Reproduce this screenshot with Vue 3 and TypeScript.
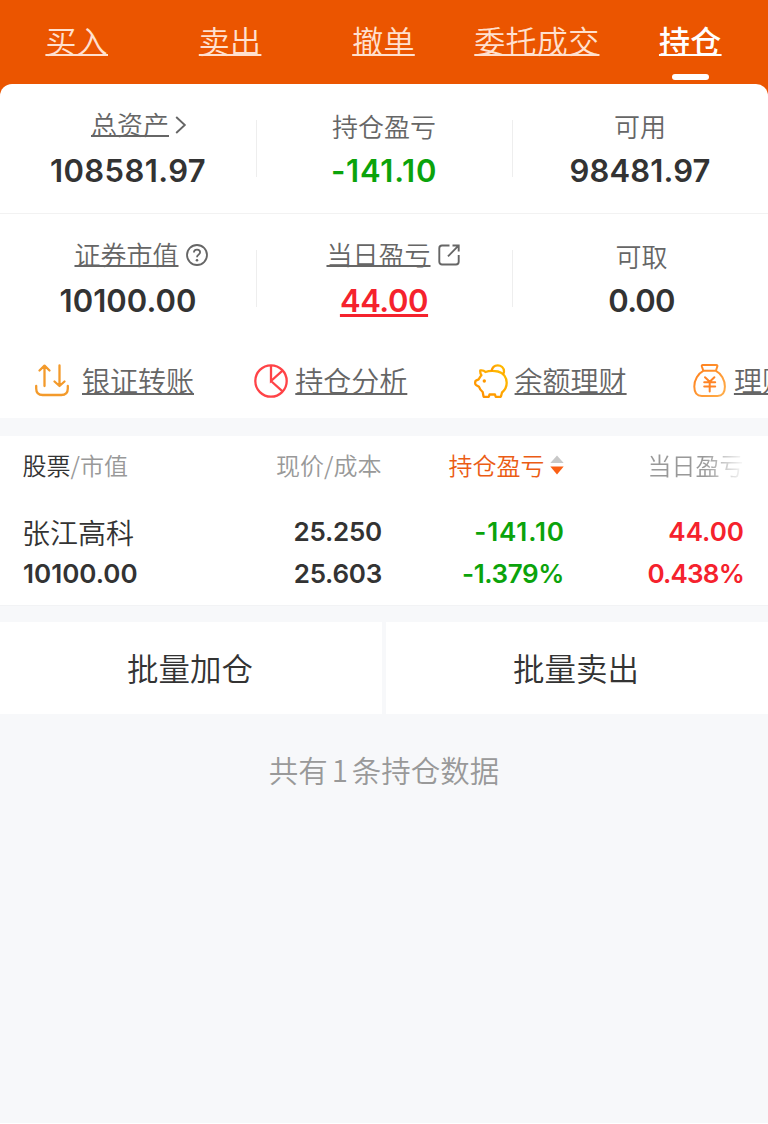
<script setup lang="ts">
interface Metric {
  label: string
  value: string
  tracking: number
  tone?: 'green' | 'red'
  icon?: 'chevron' | 'help' | 'share'
}

const tabs: string[] = ['买入', '卖出', '撤单', '委托成交', '持仓']
const activeTab = '持仓'

const rows: Metric[][] = [
  [
    { label: '总资产', value: '108581.97', tracking: 0.4, icon: 'chevron' },
    { label: '持仓盈亏', value: '-141.10', tracking: 0.75, tone: 'green' },
    { label: '可用', value: '98481.97', tracking: 0.15 },
  ],
  [
    { label: '证券市值', value: '10100.00', tracking: 0.05, icon: 'help' },
    { label: '当日盈亏', value: '44.00', tracking: -0.4, tone: 'red', icon: 'share' },
    { label: '可取', value: '0.00', tracking: -0.8 },
  ],
]

const actions = [
  { name: 'transfer', label: '银证转账' },
  { name: 'pie', label: '持仓分析' },
  { name: 'piggy', label: '余额理财' },
  { name: 'bag', label: '理财' },
]
</script>

<template>
  <div class="page">
    <nav class="tabs">
      <div v-for="t in tabs" :key="t" class="tab" :class="{ active: t === activeTab }">
        <span class="u">{{ t }}</span>
        <i v-if="t === activeTab" class="bar"></i>
      </div>
    </nav>

    <section class="card">
      <div v-for="(row, r) in rows" :key="r" class="row">
        <div v-for="m in row" :key="m.label" class="cell">
          <div class="label" :class="[m.icon ? 'link' : '', m.icon]">
            <span>{{ m.label }}</span>
            <svg v-if="m.icon === 'chevron'" width="12" height="20" viewBox="0 0 12 20" fill="none" stroke="#666" stroke-width="1.9">
              <path d="M1.200 2 9.800 10 1.200 18" />
            </svg>
            <svg v-else-if="m.icon === 'help'" width="22" height="22" viewBox="0 0 22 22" fill="none" stroke="#666" stroke-width="1.8">
              <circle cx="11" cy="11" r="10" />
              <path d="M7.9 8.5c0-1.8 1.3-2.9 3.1-2.9s3.1 1.1 3.1 2.7c0 2.2-3.1 2.4-3.1 4.9" />
              <circle cx="11" cy="16.2" r="1.3" fill="#666" stroke="none" />
            </svg>
            <svg v-else-if="m.icon === 'share'" width="22" height="22" viewBox="0 0 22 22" fill="none" stroke="#666" stroke-width="1.9">
              <path d="M11.5 1.500H4A2.700 2.700 0 0 0 1.300 4.200v13.600A2.700 2.700 0 0 0 4 20.500h14a2.700 2.700 0 0 0 2.700-2.700V11M14.500 1.500h6.200V7.500M20.500 1.700 10 12.300" />
            </svg>
          </div>
          <div class="value" :class="m.tone" :style="{ letterSpacing: m.tracking + 'px' }">{{ m.value }}</div>
        </div>
      </div>

      <div class="actions">
        <div v-for="a in actions" :key="a.name" class="action" :class="a.name">
          <svg v-if="a.name === 'transfer'" width="34" height="34" viewBox="0 0 34 34" fill="none" stroke="#f39a2b" stroke-width="2.300" stroke-linecap="round" stroke-linejoin="round">
            <path d="M9.500 22V2M4.500 6.500 9.500 1.700l5 4.800M24.500 1.500v20M19.500 17.500l5 4.500 5-4.500M1.200 22v2.500q0 6.500 6.500 6.500h18.600q6.500 0 6.500-6.500V22" />
          </svg>
          <svg v-else-if="a.name === 'pie'" width="34" height="34" viewBox="0 0 34 34" fill="none" stroke="#ff4347" stroke-width="2.300">
            <circle cx="17" cy="17" r="15.700" />
            <path d="M17 1.300V17l11.500-10.300M17 17l11.800 10.600" />
          </svg>
          <svg v-else-if="a.name === 'piggy'" width="34" height="34" viewBox="0 0 34 34" fill="none" stroke="url(#pig)" stroke-width="2.300" stroke-linejoin="round">
            <defs>
              <linearGradient id="pig" x1="1" y1="0" x2="0" y2="1">
                <stop offset="0" stop-color="#ffc000" />
                <stop offset="1" stop-color="#ff8a00" />
              </linearGradient>
            </defs>
            <path d="M6.300 6.500c2.500-.400 4 .300 5.200 1.500 3-1.200 9-1.200 12.500-.500 5.500 1.200 8.700 6 8.700 11.300 0 4-1.700 7.200-4.700 9.700l-1 3.700q-.300.800-1 .800h-3.500q-.800 0-1-.800l-.500-1.700h-5.500l-.5 1.700q-.200.800-1 .800h-3.500q-.800 0-1-.800l-.800-4.200C7 26.500 5.500 24.500 5 22.700l-2.600-1.400Q1.200 20.600 1.200 19.500v-1.600q0-1 1.200-1.500l2.300-1c.8-1.800 1.800-3 2.700-4.200-1-1.400-1.300-3-1.100-4.700Z" />
            <path d="M17.500 7.200c.6-3.600 3-5.900 6.200-5.900 3.500 0 6.300 2.600 6.300 6 0 1.300-.3 2.300-1 3.200" />
            <circle cx="10.300" cy="17" r="1.700" fill="#ff9800" stroke="none" />
          </svg>
          <svg v-else width="34" height="34" viewBox="0 0 34 34" fill="none" stroke="url(#bag)" stroke-width="2" stroke-linejoin="round" stroke-linecap="round">
            <defs>
              <linearGradient id="bag" x1="0" y1="0" x2="1" y2="1">
                <stop offset="0" stop-color="#ff7d1a" />
                <stop offset="1" stop-color="#ffae4a" />
              </linearGradient>
            </defs>
            <path d="M10.300 6.800 8.800 2.300q-.300-1.200 1-1.200h13.600q1.200 0 1 1.200l-1.500 4.500ZM10.300 6.800C5 9.500 1.300 16 1.300 22.500c0 6.500 2 9.500 7.500 9.500h15.600c5.500 0 7.500-3 7.500-9.500 0-6.500-3.700-13-9-15.700" />
            <path d="M12 13.200l4.700 4.500 4.700-4.500M16.700 17.700V27.500M11.200 18.200h11M11.200 22.500h11" stroke="#ff8426" />
          </svg>
          <span class="u">{{ a.label }}</span>
        </div>
      </div>
    </section>

    <section class="table">
      <div class="tr head">
        <div><b>股票</b>/市值</div>
        <div>现价/成本</div>
        <div class="sort">
          持仓盈亏
          <svg width="14" height="20" viewBox="0 0 14 20">
            <path d="M7 0.500 13.700 8H.300Z" fill="#c8c8c8" />
            <path d="M7 19.500 13.700 11.500H.300Z" fill="#fa5f14" />
          </svg>
        </div>
        <div class="fade">当日盈亏</div>
      </div>
      <div class="tr first">
        <div class="name">张江高科</div>
        <div class="price">25.250</div>
        <div class="green wide">-141.10</div>
        <div class="red">44.00</div>
      </div>
      <div class="tr second">
        <div>10100.00</div>
        <div class="price">25.603</div>
        <div class="green tight">-1.379%</div>
        <div class="red tighter">0.438%</div>
      </div>
    </section>

    <div class="buttons">
      <div class="btn">批量加仓</div>
      <div class="btn">批量卖出</div>
    </div>

    <p class="summary">共有<span>1</span>条持仓数据</p>
  </div>
</template>

<style>
body {
  margin: 0;
  background: #fff;
}
</style>

<style scoped>
.page {
  width: 768px;
  height: 1123px;
  overflow: hidden;
  background: #f7f8fa;
  font-family: "Noto Sans CJK SC", "Noto Sans", sans-serif;
  font-weight: 350;
  color: #333;
  white-space: nowrap;
}
.tabs {
  display: grid;
  grid-template-columns: repeat(5, 153.400px);
  height: 96px;
  background: #eb5500;
}
.tab {
  display: flex;
  flex-direction: column;
  align-items: center;
  padding-top: 19px;
  font-size: 31px;
  line-height: 42px;
  color: #ffe0cf;
  letter-spacing: 0.300px;
}
.tab.active {
  color: #fff;
  font-weight: 500;
}
.bar {
  width: 37px;
  height: 6px;
  margin-top: 13px;
  border-radius: 3px;
  background: #fff;
}
.u {
  text-decoration: underline;
  text-decoration-thickness: 2px;
  text-underline-offset: 1px;
  text-decoration-skip-ink: none;
}
.card {
  height: 334px;
  margin-top: -12px;
  border-radius: 12px 12px 0 0;
  background: #fff;
  overflow: hidden;
}
.row {
  display: grid;
  grid-template-columns: repeat(3, 1fr);
  height: 129px;
  border-bottom: 1px solid #f2f2f2;
}
.row + .row {
  border-bottom: 0;
}
.cell {
  position: relative;
  display: flex;
  flex-direction: column;
  align-items: center;
}
.cell + .cell::before {
  content: "";
  position: absolute;
  left: 0;
  top: 36px;
  width: 1px;
  height: 57px;
  background: #eee;
}
.row + .row .cell:last-child {
  padding-left: 3px;
}
.label {
  display: flex;
  align-items: center;
  height: 36px;
  margin-top: 24px;
  font-size: 26px;
  line-height: 36px;
  color: #666;
}
.label.link {
  margin-top: 22px;
  margin-bottom: 2px;
}
.label.link span {
  text-decoration: underline;
  text-decoration-thickness: 2px;
  text-underline-offset: 0;
  text-decoration-skip-ink: none;
}
.label svg {
  margin-left: 7px;
  margin-top: 2px;
}
.label.chevron {
  padding-left: 22px;
}
.label.help {
  padding-left: 26px;
}
.label.share {
  padding-left: 18px;
}
.chevron svg {
  margin-left: 6px;
}
.value {
  margin-top: 6px;
  font-family: Inter, sans-serif;
  font-size: 31px;
  font-weight: 600;
  line-height: 42px;
}
.green {
  color: #0ba30b;
}
.red {
  color: #f5222d;
}
.value.red {
  text-decoration: underline;
  text-decoration-thickness: 3px;
  text-underline-offset: 2px;
}
.actions {
  display: flex;
  padding: 18px 0 0 35px;
}
.action {
  display: flex;
  align-items: center;
  flex: 0 0 219.300px;
  height: 40px;
  font-size: 28px;
  line-height: 40px;
  color: #666;
}
.action span {
  margin-left: 7px;
  margin-bottom: 2px;
}
.action.transfer span {
  margin-left: 13px;
}
.table {
  height: 170px;
  margin-top: 18px;
  border-bottom: 1px solid #f2f3f5;
  background: #fff;
  box-sizing: border-box;
}
.tr {
  display: grid;
  grid-template-columns: 180px 179px 182px 180px;
  padding-left: 23px;
  text-align: right;
  font-family: Inter, "Noto Sans CJK SC", sans-serif;
  font-size: 26px;
  font-weight: 600;
  line-height: 42px;
}
.tr > div:first-child {
  text-align: left;
}
.price {
  letter-spacing: -0.250px;
}
.wide {
  letter-spacing: 0.850px;
  margin-right: -0.850px;
}
.tight {
  letter-spacing: -0.400px;
}
.tighter {
  letter-spacing: -0.800px;
}
.head {
  padding-top: 8px;
  padding-bottom: 1px;
  padding-left: 22.500px;
  font-family: "Noto Sans CJK SC", sans-serif;
  font-size: 24px;
  font-weight: 350;
  color: #999;
}
.head b {
  font-weight: 350;
  color: #333;
}
.head .sort {
  display: flex;
  justify-content: flex-end;
  align-items: center;
  gap: 5px;
  color: #eb5c14;
}
.head .fade {
  -webkit-mask-image: linear-gradient(90deg, #000 140px, transparent 182px);
  mask-image: linear-gradient(90deg, #000 140px, transparent 182px);
}
.first {
  padding-top: 24px;
}
.tr .name {
  margin-left: -1px;
  font-family: "Noto Sans CJK SC", sans-serif;
  font-size: 28px;
  font-weight: 350;
}
.buttons {
  display: grid;
  grid-template-columns: 1fr 1fr;
  gap: 4px;
  height: 92px;
  margin-top: 16px;
}
.btn {
  height: 92px;
  padding-right: 2px;
  background: #fff;
  text-align: center;
  font-size: 31.500px;
  line-height: 90px;
}
.summary {
  margin: 34px 0 0;
  text-align: center;
  font-size: 29.500px;
  line-height: 42px;
  color: #999;
}
.summary span {
  margin: 0 4px;
}
</style>
